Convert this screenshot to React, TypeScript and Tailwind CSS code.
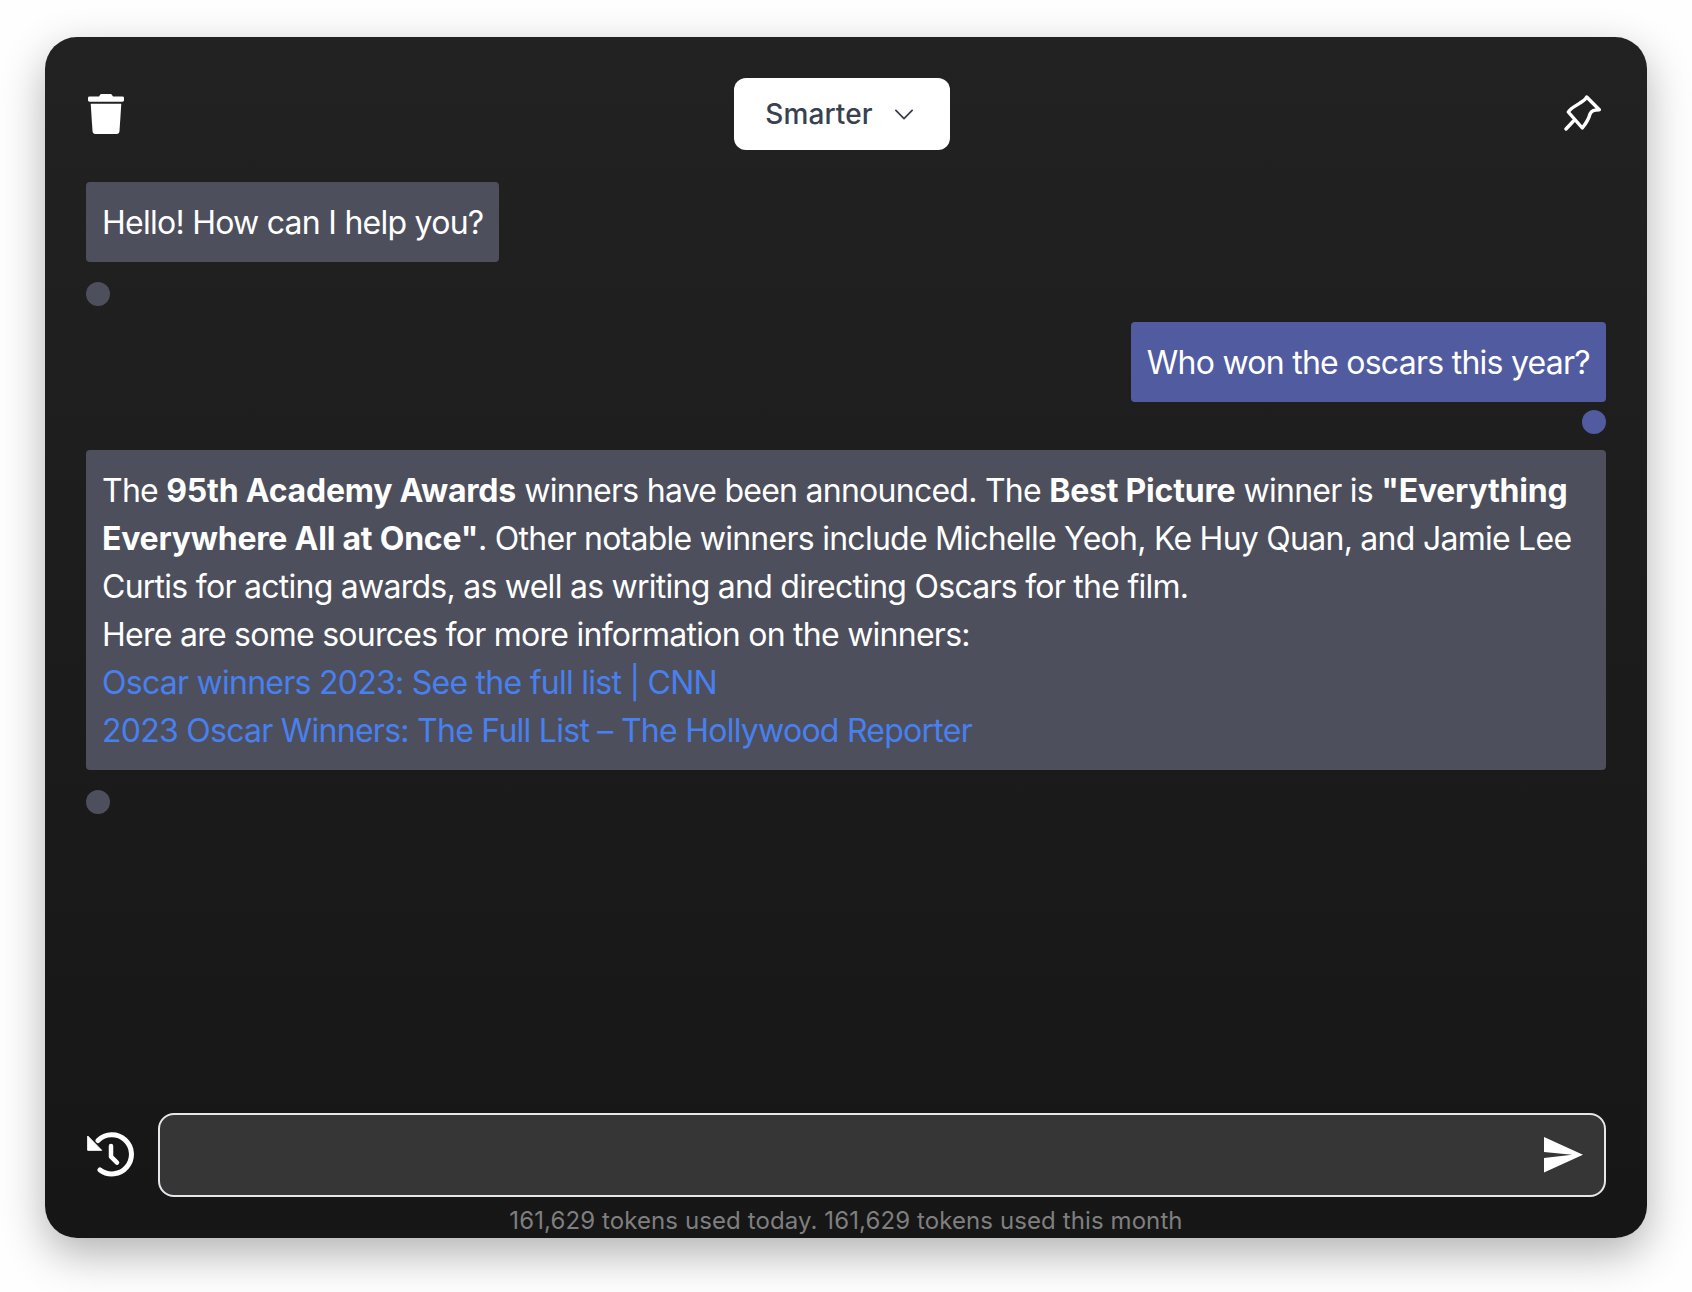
function Trash() {
  return (
    <svg viewBox="0 0 36 40" className="w-[36px] h-[40px]" fill="white">
      <path d="M11 2.6 L12.3 0.6 Q12.6 0 13.4 0 H22.6 Q23.4 0 23.7 0.6 L25 2.6 H34.5 Q36 2.6 36 4 V6.3 Q36 7.7 34.5 7.7 H1.5 Q0 7.7 0 6.3 V4 Q0 2.6 1.5 2.6 Z" />
      <path d="M2.7 9.7 H33.3 L31.5 37 Q31.3 40 28.5 40 H7.5 Q4.7 40 4.5 37 Z" />
    </svg>
  );
}

function Pin() {
  return (
    <svg viewBox="0 0 37 36" className="w-[37px] h-[36px]" fill="none" stroke="white" strokeWidth="3.4" strokeLinecap="round" strokeLinejoin="round">
      <path d="M2 34 L9.5 26" />
      <path d="M22.7 2 L35.3 14.7 C30 15 27.5 15.5 26 19 C25 23 21.5 29 18.3 33 L4.3 17 C7 12.5 12 11 16 8 C19 6 21.5 4.5 22.7 2 Z" />
    </svg>
  );
}

function History() {
  return (
    <svg viewBox="5 5 48 48" className="w-[48px] h-[48px]" fill="none">
      <path d="M17 14.5 A19.6 19.6 0 1 1 19 44" stroke="white" strokeWidth="5" strokeLinecap="round" />
      <path d="M6.7 10 L20.7 24.3 L6.7 24.3 Z" fill="white" stroke="white" strokeWidth="1" strokeLinejoin="round" />
      <path d="M30 20 V30.7 L36 36.7" stroke="white" strokeWidth="4.5" strokeLinecap="round" strokeLinejoin="round" />
    </svg>
  );
}

function Send() {
  return (
    <svg viewBox="0 0 39 36" className="w-[39px] h-[36px]" fill="white">
      <path d="M0 0 L39 17.7 L0 35.5 V21 L28 17.7 L0 15 Z" />
    </svg>
  );
}

function Chevron() {
  return (
    <svg viewBox="0 0 20 12" className="w-[18px] h-[11px]" fill="none" stroke="#374151" strokeWidth="2" strokeLinecap="round" strokeLinejoin="round">
      <path d="M1 1.5 L10 10.5 L19 1.5" />
    </svg>
  );
}

function Dot({ color }: { color: string }) {
  return <div className={`w-6 h-6 rounded-full ${color}`} />;
}

export default function App() {
  return (
    <div className="w-[1692px] h-[1292px] bg-[#fefefe] pt-[37px] pl-[45px] font-['Inter','Liberation_Sans',sans-serif]">
      <div className="w-[1602px] h-[1201px] rounded-[32px] bg-gradient-to-b from-[#222222] to-[#161616] shadow-[0_16px_44px_rgba(0,0,0,0.3)] px-[41px] flex flex-col text-white">
        <header className="h-[145px] shrink-0 flex items-start justify-between">
          <button className="mt-[57px] ml-[2px]">
            <Trash />
          </button>
          <button className="mt-[41px] w-[216px] h-[72px] rounded-[12px] bg-white text-[#374151] text-[28px] font-medium flex items-center justify-center gap-[22px] pr-[6px]">
            <span className="tracking-[0.1px]">Smarter</span>
            <Chevron />
          </button>
          <button className="mt-[58px] w-[46px] pl-[4px]">
            <Pin />
          </button>
        </header>

        <main className="flex-1 flex flex-col text-[32px] leading-[48px] tracking-[-0.74px]">
          <div className="self-start rounded-[4px] bg-[#4d4f5c] px-4 pt-[17px] pb-[15px]">Hello! How can I help you?</div>
          <div className="mt-5 self-start"><Dot color="bg-[#4d4f5c]" /></div>

          <div className="mt-4 self-end rounded-[4px] bg-[#515ba0] px-4 pt-[17px] pb-[15px]">Who won the oscars this year?</div>
          <div className="mt-2 self-end"><Dot color="bg-[#515ba0]" /></div>

          <div className="mt-4 rounded-[4px] bg-[#4d4f5c] px-4 pt-[17px] pb-[15px]">
            <p>
              The <strong className="font-bold tracking-[-0.22px]">95th Academy Awards</strong> winners have been announced. The{" "}
              <strong className="font-bold tracking-[-0.22px]">Best Picture</strong> winner is{" "}
              <strong className="font-bold tracking-[-0.22px]">"Everything Everywhere All at Once"</strong>. Other notable winners include
              Michelle Yeoh, Ke Huy Quan, and Jamie Lee Curtis for acting awards, as well as writing and directing Oscars
              for the film.
            </p>
            <p>Here are some sources for more information on the winners:</p>
            <p><a className="text-[#4880f0]">Oscar winners 2023: See the full list | CNN</a></p>
            <p><a className="text-[#4880f0]">2023 Oscar Winners: The Full List – The Hollywood Reporter</a></p>
          </div>
          <div className="mt-5 self-start"><Dot color="bg-[#4d4f5c]" /></div>
        </main>

        <footer className="shrink-0">
          <div className="flex items-center gap-[24px]">
            <button className="shrink-0 w-[48px]"><History /></button>
            <div className="flex-1 h-[84px] rounded-[16px] border-2 border-[#e5e7eb] bg-[#363636] flex items-center justify-end pr-[21px]">
              <Send />
            </div>
          </div>
          <div className="h-[41px] text-center text-[24px] leading-[48px] tracking-[0.1px] text-[#7f7f7f] whitespace-nowrap">
            161,629 tokens used today. 161,629 tokens used this month
          </div>
        </footer>
      </div>
    </div>
  );
}
